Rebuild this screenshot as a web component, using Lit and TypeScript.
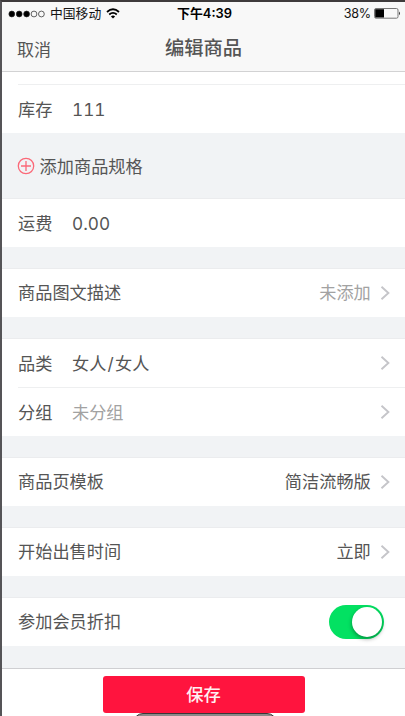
import { LitElement, html, css, svg, nothing } from "lit";
import { customElement, property } from "lit/decorators.js";

@customElement("form-row")
class FormRow extends LitElement {
  @property() label = "";
  @property() value = "";
  @property() trailing = "";
  @property({ type: Boolean }) muted = false;
  @property({ type: Boolean }) arrow = false;
  @property({ type: Boolean }) toggle = false;

  static styles = css`
    :host {
      display: flex;
      align-items: center;
      height: 48px;
      padding: 0 15px 0 16px;
      box-sizing: border-box;
      color: #555;
      font-size: 17.2px;
      line-height: 24px;
      white-space: nowrap;
    }
    .paired { padding-top: 2px; }
    .value {
      margin-left: 19.6px;
      padding-top: 2px;
      font-family: Inter, "Noto Sans CJK SC", sans-serif;
      font-variant-numeric: tabular-nums;
    }
    .slash { margin: 0 1.2px; }
    .space { flex: 1; }
    .muted { color: #a2a2a2; }
    .arrow { display: block; margin-left: 9.2px; }
    .switch {
      width: 55px;
      height: 34px;
      box-sizing: border-box;
      padding: 2px;
      margin-right: 6px;
      border-radius: 17px;
      background: #03e162;
      display: flex;
      justify-content: flex-end;
    }
    .knob {
      width: 30px;
      height: 30px;
      border-radius: 50%;
      background: #fff;
      box-shadow: 0 2px 4px rgba(0, 0, 0, 0.38);
    }
  `;

  render() {
    const tone = this.muted ? "muted" : "";
    const parts = this.value
      .split("/")
      .map((part, i) => (i ? html`<span class="slash">/</span>${part}` : part));
    return html`
      <span class=${this.value ? "paired" : ""}>${this.label}</span>
      ${this.value ? html`<span class="value ${tone}">${parts}</span>` : nothing}
      <span class="space"></span>
      ${this.trailing ? html`<span class="${tone}">${this.trailing}</span>` : nothing}
      ${this.arrow
        ? html`<svg class="arrow" width="10" height="16" viewBox="0 0 10 16" fill="none" stroke="#c5c5c9" stroke-width="1.9">
            <path d="M1.5 1.7 8.4 8 1.5 14.3" />
          </svg>`
        : nothing}
      ${this.toggle ? html`<span class="switch"><span class="knob"></span></span>` : nothing}
    `;
  }
}

@customElement("app-root")
class AppRoot extends LitElement {
  static styles = css`
    :host {
      display: flex;
      flex-direction: column;
      position: relative;
      box-sizing: border-box;
      width: 405px;
      height: 716px;
      overflow: hidden;
      border-top: 2px solid #3e3b3c;
      border-left: 2px solid #555457;
      background: #f1f3f5;
      font-family: "Noto Sans", "Noto Sans CJK SC", sans-serif;
      color: #555;
    }
    .top {
      height: 70px;
      box-sizing: border-box;
      background: #f8f8f8;
      border-bottom: 1px solid #d2d2d3;
      flex: none;
    }
    .status {
      display: grid;
      grid-template-columns: 1fr auto 1fr;
      align-items: center;
      height: 23px;
      padding: 0 4px 0 6px;
      color: #151515;
      font-family: Inter, "Noto Sans CJK SC", sans-serif;
      font-size: 12.8px;
      line-height: 20px;
      white-space: nowrap;
    }
    .carrier, .battery { display: flex; align-items: center; }
    .carrier { gap: 5px; }
    .battery { justify-content: flex-end; gap: 3px; font-size: 12.6px; letter-spacing: -0.2px; }
    .clock { font-weight: 600; color: #000; font-size: 12.9px; }
    .nav {
      display: grid;
      grid-template-columns: 1fr auto 1fr;
      align-items: center;
      height: 46px;
      padding: 0 15px;
      font-size: 17px;
    }
    .title { font-size: 19.3px; line-height: 28px; font-weight: 500; }
    .group {
      background: #fff;
      flex: none;
      margin-bottom: 21px;
      border-top: 1px solid #ebecee;
    }
    .stock { margin: 0; border: 0; padding-top: 12px; }
    .rule { height: 1px; margin-left: 16px; background: #eeeff0; }
    .add {
      display: flex;
      align-items: center;
      gap: 4.6px;
      height: 65px;
      flex: none;
      padding-left: 15px;
      font-size: 17.2px;
    }
    .footer {
      flex: none;
      display: flex;
      justify-content: center;
      box-sizing: border-box;
      height: 48px;
      margin-top: 1px;
      padding-top: 7px;
      background: #fff;
      border-top: 1px solid #cfcfd2;
    }
    .save {
      width: 202px;
      height: 36.5px;
      padding: 0;
      border: 0;
      border-radius: 3px;
      background: #ff143e;
      color: #fff0f2;
      font: 500 17.3px/36px "Noto Sans CJK SC", sans-serif;
    }
    .handle {
      position: absolute;
      left: 131px;
      bottom: -17px;
      width: 144px;
      height: 20px;
      box-sizing: border-box;
      border: 1px solid #3b3537;
      border-radius: 14px;
      background: #8c8889;
    }
  `;

  render() {
    return html`
      <header class="top">
        <div class="status">
          <span class="carrier">
            <svg width="37" height="8" viewBox="0 0 37 8" stroke="#222" stroke-width="0.7">
              ${[0, 1, 2, 3, 4].map(
                (i) => svg`<circle cx=${3.8 + i * 7.4} cy="4" r="2.9" fill=${i < 3 ? "#000" : "none"} />`
              )}
            </svg>
            <span>中国移动</span>
            <svg width="14" height="11" viewBox="0 0 14 11" fill="none" stroke="#000" stroke-width="1.8">
              <path d="M1 4Q7-1.4 13 4M3.2 6.5Q7 3.2 10.8 6.5" />
              <path d="M7 10.6 4.9 8.4Q7 6.8 9.1 8.4Z" fill="#000" stroke="none" />
            </svg>
          </span>
          <span class="clock">下午4:39</span>
          <span class="battery">
            <span>38%</span>
            <svg width="27" height="11" viewBox="0 0 27 11">
              <rect x="0.5" y="0.5" width="23.5" height="9.7" rx="1.5" fill="none" stroke="#777" />
              <rect x="1.2" y="1.2" width="8.8" height="8.3" fill="#000" />
              <path d="M25 3.5Q27 5.4 25 7.3Z" fill="#333" />
            </svg>
          </span>
        </div>
        <div class="nav"><span>取消</span><span class="title">编辑商品</span></div>
      </header>

      <section class="group stock">
        <div class="rule"></div>
        <form-row label="库存" value="111"></form-row>
      </section>
      <div class="add">
        <svg width="18" height="18" viewBox="0 0 18 18" fill="none" stroke="#fb6978" stroke-width="1.3">
          <circle cx="9" cy="9" r="7.7" />
          <path d="M9 4v10M4 9h10" />
        </svg>
        <span>添加商品规格</span>
      </div>
      <section class="group"><form-row label="运费" value="0.00"></form-row></section>
      <section class="group"><form-row label="商品图文描述" trailing="未添加" muted arrow></form-row></section>
      <section class="group">
        <form-row label="品类" value="女人/女人" arrow></form-row>
        <div class="rule"></div>
        <form-row label="分组" value="未分组" muted arrow></form-row>
      </section>
      <section class="group"><form-row label="商品页模板" trailing="简洁流畅版" arrow></form-row></section>
      <section class="group"><form-row label="开始出售时间" trailing="立即" arrow></form-row></section>
      <section class="group"><form-row label="参加会员折扣" toggle></form-row></section>
      <footer class="footer"><button class="save">保存</button></footer>
      <div class="handle"></div>
    `;
  }
}
